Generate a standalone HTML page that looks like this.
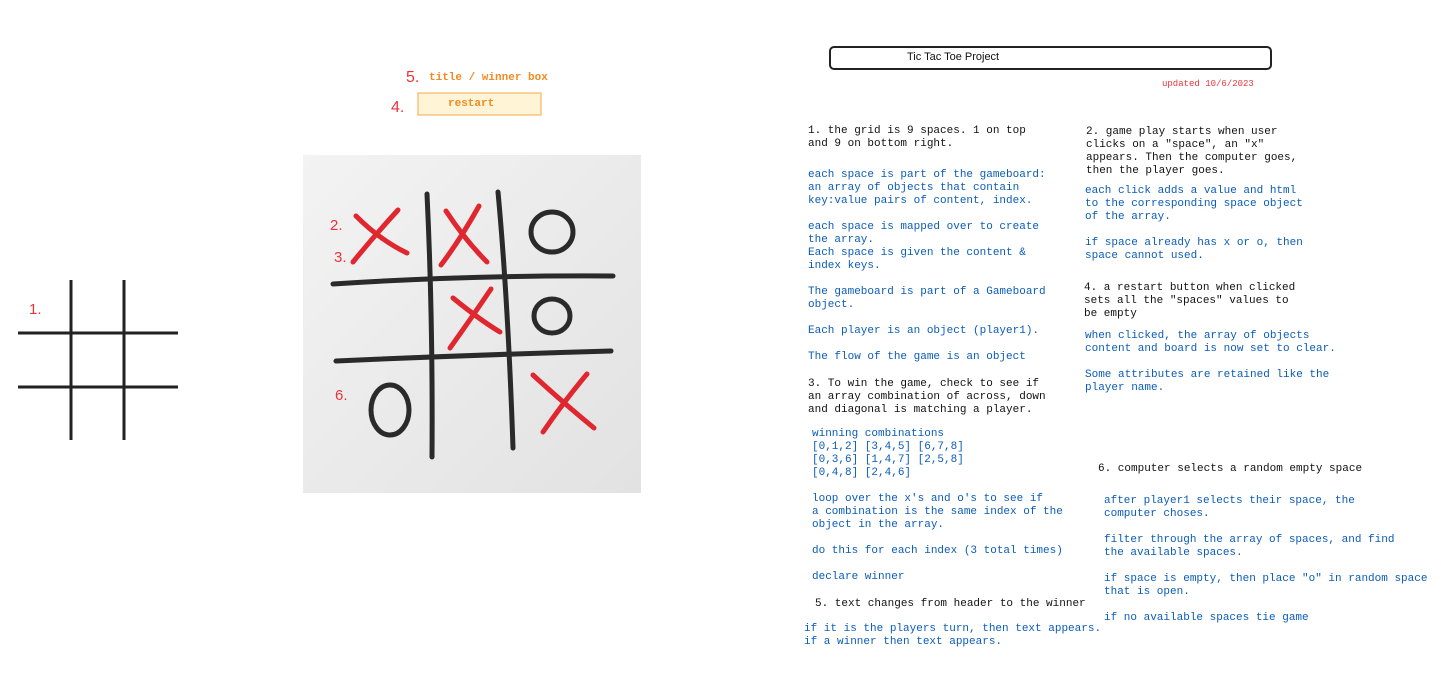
<!DOCTYPE html>
<html><head><meta charset="utf-8"><style>
body{margin:0;width:1455px;height:681px;background:#fff;position:relative;overflow:hidden;font-family:"Liberation Mono",monospace;}
.t{position:absolute;white-space:pre;font-size:11px;line-height:13px;color:#111;}
.b{color:#0b5cb8;}
.r{color:#e8343a;font-family:"Liberation Sans",sans-serif;font-size:15px;position:absolute;}
</style></head><body>
<svg width="1455" height="681" style="position:absolute;left:0;top:0">
<defs><linearGradient id="g" x1="0" y1="0" x2="1" y2="1"><stop offset="0" stop-color="#f3f3f3"/><stop offset="1" stop-color="#e2e2e2"/></linearGradient></defs>
<g stroke="#222" stroke-width="3">
<line x1="71" y1="280" x2="71" y2="440"/><line x1="124" y1="280" x2="124" y2="440"/>
<line x1="18" y1="333" x2="178" y2="333"/><line x1="18" y1="387" x2="178" y2="387"/>
</g>
<rect x="303" y="155" width="338" height="338" fill="url(#g)"/>
<g stroke="#2a2a2a" stroke-width="5" fill="none" stroke-linecap="round">
<path d="M427 194 Q433 320 432 457"/>
<path d="M498 192 Q508 300 513 448"/>
<path d="M333 284 Q470 275 613 276"/>
<path d="M336 361 Q470 355 611 351"/>
<ellipse cx="552" cy="232" rx="21" ry="20"/>
<ellipse cx="552" cy="316" rx="18" ry="17"/>
<ellipse cx="390" cy="410" rx="19" ry="25"/>
</g>
<g stroke="#e0262e" stroke-width="5" fill="none" stroke-linecap="round">
<path d="M356 216 Q380 240 407 253"/><path d="M398 210 Q375 235 353 262"/>
<path d="M446 211 Q465 240 487 262"/><path d="M479 206 Q460 240 441 265"/>
<path d="M453 298 Q480 320 500 332"/><path d="M491 289 Q470 320 450 348"/>
<path d="M533 375 Q560 400 594 428"/><path d="M587 374 Q565 400 543 432"/>
</g>
<rect x="830" y="47" width="441" height="22" rx="4" fill="none" stroke="#222" stroke-width="2"/>
<rect x="418" y="93" width="123" height="22" fill="#fff5d6" stroke="#f2a94a" stroke-width="1"/>
</svg>
<div class="r" style="left:406px;top:69px;font-size:16px">5.</div>
<div class="r" style="left:391px;top:99px;font-size:16px">4.</div>
<div class="t" style="left:429px;top:72px;color:#f28a20;font-size:11px;font-weight:bold">title / winner box</div>
<div class="t" style="left:448px;top:98px;color:#f28a20;font-size:11px;font-weight:bold">restart</div>
<div class="r" style="left:29px;top:301px">1.</div>
<div class="r" style="left:330px;top:217px">2.</div>
<div class="r" style="left:334px;top:249px">3.</div>
<div class="r" style="left:335px;top:387px">6.</div>
<div class="t" style="left:907px;top:51px;font-family:'Liberation Sans',sans-serif;font-size:11px">Tic Tac Toe Project</div>
<div class="t" style="left:1162px;top:78px;color:#e8343a;font-size:9px">updated 10/6/2023</div>

<div class="t" style="left:808px;top:125px">1. the grid is 9 spaces. 1 on top
and 9 on bottom right.</div>
<div class="t b" style="left:808px;top:169px">each space is part of the gameboard:
an array of objects that contain
key:value pairs of content, index.

each space is mapped over to create
the array.
Each space is given the content &amp;
index keys.

The gameboard is part of a Gameboard
object.

Each player is an object (player1).

The flow of the game is an object</div>
<div class="t" style="left:808px;top:378px">3. To win the game, check to see if
an array combination of across, down
and diagonal is matching a player.</div>
<div class="t b" style="left:812px;top:428px">winning combinations
[0,1,2] [3,4,5] [6,7,8]
[0,3,6] [1,4,7] [2,5,8]
[0,4,8] [2,4,6]

loop over the x's and o's to see if
a combination is the same index of the
object in the array.

do this for each index (3 total times)

declare winner</div>
<div class="t" style="left:815px;top:598px">5. text changes from header to the winner</div>
<div class="t b" style="left:804px;top:623px">if it is the players turn, then text appears.
if a winner then text appears.</div>

<div class="t" style="left:1086px;top:126px">2. game play starts when user
clicks on a "space", an "x"
appears. Then the computer goes,
then the player goes.</div>
<div class="t b" style="left:1085px;top:185px">each click adds a value and html
to the corresponding space object
of the array.

if space already has x or o, then
space cannot used.</div>
<div class="t" style="left:1084px;top:282px">4. a restart button when clicked
sets all the "spaces" values to
be empty</div>
<div class="t b" style="left:1085px;top:330px">when clicked, the array of objects
content and board is now set to clear.

Some attributes are retained like the
player name.</div>
<div class="t" style="left:1098px;top:463px">6. computer selects a random empty space</div>
<div class="t b" style="left:1104px;top:495px">after player1 selects their space, the
computer choses.

filter through the array of spaces, and find
the available spaces.

if space is empty, then place "o" in random space
that is open.

if no available spaces tie game</div>
</body></html>
